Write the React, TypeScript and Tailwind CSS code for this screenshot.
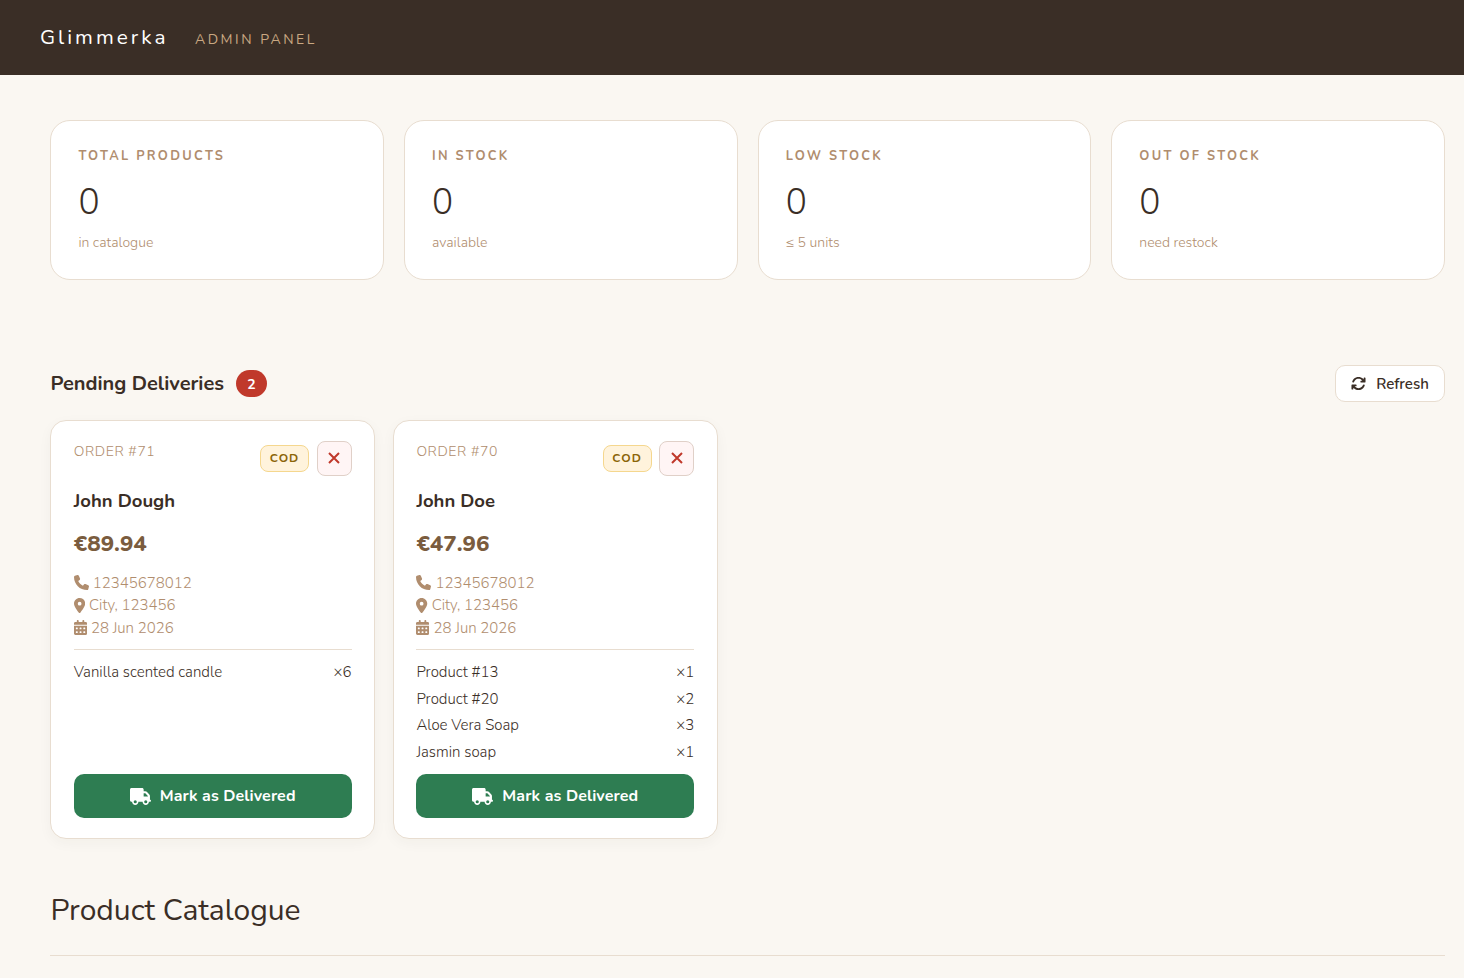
import {
  FaArrowsRotate,
  FaCalendarDays,
  FaLocationDot,
  FaPhone,
  FaTruck,
} from "react-icons/fa6";

type Stat = {
  label: string;
  value: number;
  hint: string;
};

type Order = {
  id: number;
  customer: string;
  total: number;
  phone: string;
  address: string;
  date: string;
  payment: string;
  items: { name: string; qty: number }[];
};

const stats: Stat[] = [
  { label: "Total Products", value: 0, hint: "in catalogue" },
  { label: "In Stock", value: 0, hint: "available" },
  { label: "Low Stock", value: 0, hint: "≤ 5 units" },
  { label: "Out of Stock", value: 0, hint: "need restock" },
];

const orders: Order[] = [
  {
    id: 71,
    customer: "John Dough",
    total: 89.94,
    phone: "12345678012",
    address: "City, 123456",
    date: "28 Jun 2026",
    payment: "COD",
    items: [{ name: "Vanilla scented candle", qty: 6 }],
  },
  {
    id: 70,
    customer: "John Doe",
    total: 47.96,
    phone: "12345678012",
    address: "City, 123456",
    date: "28 Jun 2026",
    payment: "COD",
    items: [
      { name: "Product #13", qty: 1 },
      { name: "Product #20", qty: 2 },
      { name: "Aloe Vera Soap", qty: 3 },
      { name: "Jasmin soap", qty: 1 },
    ],
  },
];

function StatCard({ label, value, hint }: Stat) {
  return (
    <div className="h-[160px] rounded-[20px] border border-[#e8ddd0] bg-white px-[27px] pt-[26px]">
      <p className="text-[12.8px] font-bold uppercase leading-[18px] tracking-[2.3px] text-[#b08d6e]">
        {label}
      </p>
      <p className="mt-[15px] text-[35.2px] font-light leading-[44px]">
        {value}
      </p>
      <p className="mt-[9px] text-[14px] font-light leading-5 text-[#b08d6e]">
        {hint}
      </p>
    </div>
  );
}

function OrderCard({ order }: { order: Order }) {
  return (
    <div className="flex h-[419px] flex-col rounded-2xl border border-[#e8ddd0] bg-white px-[22.4px] py-5 shadow-[0_4px_14px_rgba(58,46,38,0.04)]">
      <div className="flex h-[35px] items-start justify-between">
        <span className="pt-px text-[14px] font-light leading-5 tracking-[0.6px] text-[#b08d6e]">
          ORDER #{order.id}
        </span>
        <div className="flex items-center gap-[7.6px]">
          <span className="flex h-[27px] w-[49px] items-center justify-center rounded-lg border border-[#f5d78e] bg-[#fff3dc] pb-0.5 text-[12px] font-bold tracking-[1px] text-[#8b6508]">
            {order.payment}
          </span>
          <button
            type="button"
            className="flex size-[35px] items-center justify-center rounded-lg border border-[#e0d0c8] bg-[#fff5f5] pb-px text-[#c0392b]"
          >
            <svg
              width="12"
              height="12"
              viewBox="0 0 12 12"
              stroke="currentColor"
              strokeWidth="2"
            >
              <path d="M1 1l10 10M11 1L1 11" />
            </svg>
          </button>
        </div>
      </div>

      <h3 className="mt-3 text-[18.5px] font-bold leading-[27px]">
        {order.customer}
      </h3>
      <p className="mt-[14px] text-[22.4px] font-extrabold leading-[30px] text-[#7a5c3e]">
        €{order.total.toFixed(2)}
      </p>

      <div className="mt-[12.5px] text-[15px] font-light leading-[22.5px] text-[#b08d6e]">
        <p className="flex items-center gap-1">
          <FaPhone size={15} />
          {order.phone}
        </p>
        <p className="flex items-center gap-1">
          <FaLocationDot size={15} className="w-[11.25px]" />
          {order.address}
        </p>
        <p className="flex items-center gap-1">
          <FaCalendarDays size={15} className="w-[13.1px]" />
          {order.date}
        </p>
      </div>

      <ul className="mt-[10px] border-t border-[#e8ddd0] pt-[9px] text-[15px] font-light leading-[26.6px]">
        {order.items.map((item) => (
          <li key={item.name} className="flex justify-between">
            <span>{item.name}</span>
            <span>×{item.qty}</span>
          </li>
        ))}
      </ul>

      <button
        type="button"
        className="mt-auto flex h-11 items-center justify-center gap-[9px] rounded-[10px] bg-[#2e7d52] text-[16px] font-bold tracking-[0.1px] text-white"
      >
        <FaTruck size={17} className="w-[21px]" />
        Mark as Delivered
      </button>
    </div>
  );
}

export default function App() {
  return (
    <div className="h-[978px] overflow-hidden bg-[#faf7f2] font-['Nunito','Open_Sans',sans-serif] text-[#3a2e26]">
      <header className="flex h-[75px] items-center gap-[26.5px] bg-[#3a2e26] px-10">
        <span className="text-[20.8px] font-normal tracking-[3px] text-white">
          Glimmerka
        </span>
        <span className="pt-[3px] text-[14px] font-normal tracking-[2.5px] text-[#c9a882]">
          ADMIN PANEL
        </span>
      </header>

      <main className="pl-[50.4px] pr-[19px] pt-[45px]">
        <section className="grid grid-cols-4 gap-5">
          {stats.map((stat) => (
            <StatCard key={stat.label} {...stat} />
          ))}
        </section>

        <section className="mt-[85px]">
          <div className="flex items-center justify-between">
            <div className="flex items-center gap-3">
              <h2 className="text-[20px] font-bold">Pending Deliveries</h2>
              <span className="flex h-[27px] w-[31px] items-center justify-center rounded-[20px] bg-[#c0392b] pt-px text-[14px] font-bold text-white">
                {orders.length}
              </span>
            </div>
            <button
              type="button"
              className="flex h-[37px] w-[110px] items-center justify-center gap-[10px] rounded-[10px] border border-[#e8ddd0] bg-white text-[15px] font-semibold"
            >
              <FaArrowsRotate size={15} />
              <span className="pt-px">Refresh</span>
            </button>
          </div>

          <div className="mt-[18px] grid grid-cols-[324.6px_324.6px] gap-[18px]">
            {orders.map((order) => (
              <OrderCard key={order.id} order={order} />
            ))}
          </div>
        </section>

        <h2 className="mt-[52px] border-b border-[#e8ddd0] pb-6 text-[30px] font-normal leading-10">
          Product Catalogue
        </h2>
      </main>
    </div>
  );
}
